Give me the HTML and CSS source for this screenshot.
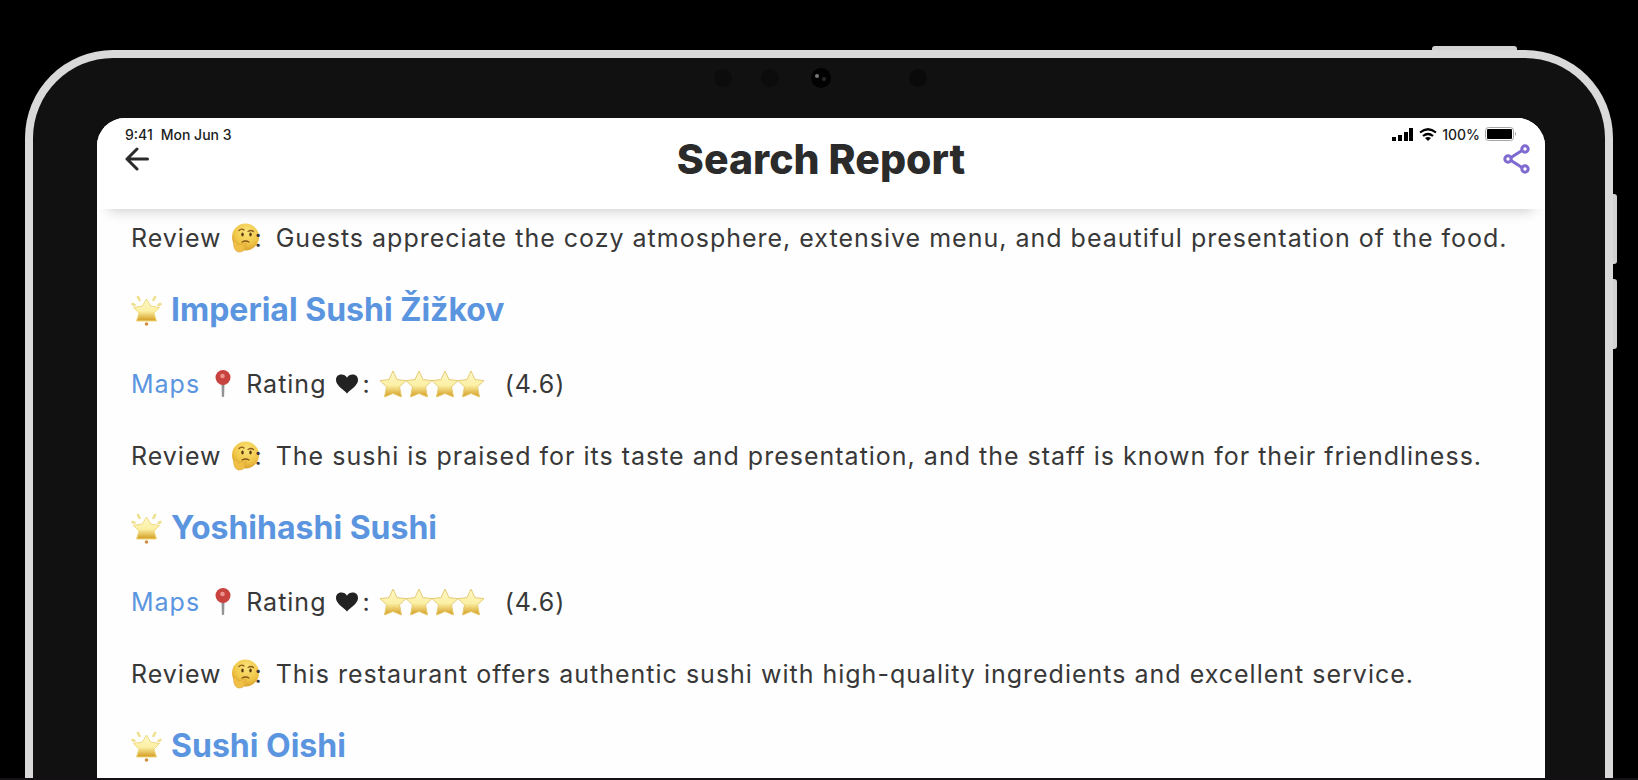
FILE: index.html
```html
<!DOCTYPE html>
<html lang="en">
<head>
    <meta charset="UTF-8">
    <meta name="viewport" content="width=device-width, initial-scale=1.0">
    <title>Search Report</title>
    <link rel="stylesheet" href="styles.css">
</head>
<body>
    <!-- shared icons -->
    <svg class="defs" width="0" height="0" aria-hidden="true">
        <defs>
            <linearGradient id="gold" x1="0" y1="0" x2="0" y2="1">
                <stop offset="0" stop-color="#fdf8cc"/>
                <stop offset="0.55" stop-color="#fbf0a4"/>
                <stop offset="1" stop-color="#d39a1c"/>
            </linearGradient>
            <radialGradient id="face" cx="0.55" cy="0.3" r="0.75">
                <stop offset="0" stop-color="#fbe37b"/>
                <stop offset="0.6" stop-color="#f0c848"/>
                <stop offset="1" stop-color="#d79a2b"/>
            </radialGradient>
            <symbol id="glow" viewBox="0 0 30 32">
                <path d="M15 5l4.200 7 8.800 1.500-5.500 5.500 2.500 8H5l2.500-8L2 13.500 10.800 12z" fill="url(#gold)" stroke="#f0da80" stroke-width="1" stroke-linejoin="round"/>
                <path d="M8 6l-1.500-3M22 6l1.500-3M3 11l-2-1M27 11l2-1" stroke="#efe08f" stroke-width="2.600" stroke-linecap="round"/>
                <circle cx="15" cy="30" r="1.800" fill="#d08f3e"/>
            </symbol>
            <symbol id="star" viewBox="0 0 28 28">
                <path d="M14 1l4 8.600 9 1-6.500 6.200L22.500 27 14 23.500 5.500 27l2-10.200L1 10.600l9-1z" fill="url(#gold)" stroke="#e6cb72" stroke-width="1" stroke-linejoin="round"/>
            </symbol>
            <symbol id="think" viewBox="0 0 28 30">
                <circle cx="14.500" cy="14" r="13.500" fill="url(#face)"/>
                <path d="M8 7.500q2.500-2.500 5-.5M17 8.500q3-2 5.500 0" fill="none" stroke="#8a5a1c" stroke-width="1.300" stroke-linecap="round"/>
                <ellipse cx="11.500" cy="11.500" rx="1.200" ry="2" fill="#54370f"/>
                <ellipse cx="19.500" cy="11.500" rx="1.200" ry="2" fill="#54370f"/>
                <path d="M11 19q3.500-2 7 0" fill="none" stroke="#85551a" stroke-width="1.300" stroke-linecap="round"/>
                <path d="M2.500 19q1.500-2 3 0l2 3 6-2q2.500-.3 2 1.500l-3 1.500q2.500 1 1 3.500-2 3-6 2.500Q2.500 28 2.500 19z" fill="#efc045" stroke="#dba236" stroke-width="0.600"/>
            </symbol>
            <symbol id="pin" viewBox="0 0 16 28">
                <path d="M7 13h2l-.4 13.500h-1.200z" fill="#8d8d90" stroke="#8d8d90"/>
                <circle cx="8" cy="7.500" r="7.500" fill="#c8423e"/>
                <circle cx="7.500" cy="6" r="2.300" fill="#ec938c"/>
            </symbol>
            <symbol id="heart" viewBox="0 0 24 22">
                <path d="M12 20.500C8 16 1 12.500 1 7c0-6.500 8.500-7 11-2.200C14.500 0 23 .5 23 7c0 5.500-7 9-11 13.500z" fill="#222"/>
            </symbol>
        </defs>
    </svg>

    <div class="tablet">
        <span class="key key-power"></span>
        <span class="key key-up"></span>
        <span class="key key-down"></span>
        <div class="sensors">
            <svg width="212" height="24" viewBox="0 0 212 24">
                <circle cx="8" cy="12" r="9" fill="#0c0c0c"/>
                <circle cx="55" cy="12" r="9" fill="#0c0c0c"/>
                <circle cx="106" cy="12" r="10" fill="#020202"/>
                <circle cx="102" cy="10" r="2" fill="#777"/>
                <circle cx="109" cy="13" r="2" fill="#292929"/>
                <circle cx="203" cy="12" r="9" fill="#0a0a0a"/>
            </svg>
        </div>

        <div class="screen">
            <header class="header">
                <div class="status">
                    <span class="time">9:41</span>
                    <span>Mon Jun 3</span>
                    <div class="status-right">
                        <svg width="22" height="13" viewBox="0 0 22 13">
                            <path d="M0 9h4v4H0zM6 7h4v6H6zM12 4h4v9h-4zM17 0h4v13h-4z"/>
                        </svg>
                        <svg width="18" height="13" viewBox="0 0 18 13">
                            <path d="M1 4.500q8-6.500 16 0M4 8q5-4 10 0" fill="none" stroke="#000" stroke-width="2.200"/>
                            <path d="M6 10q3-2.200 6 0l-3 3z"/>
                        </svg>
                        <span>100%</span>
                        <svg width="32" height="14" viewBox="0 0 32 14">
                            <rect x="0.500" y="0.500" width="28" height="13" rx="3" fill="#fff" stroke="#a5a5a5"/>
                            <rect x="2" y="2" width="25" height="10" rx="1"/>
                            <path d="M30 5q2 2 0 4z" fill="#a5a5a5"/>
                        </svg>
                    </div>
                </div>
                <div class="bar">
                    <button class="icon-btn" type="button" aria-label="Back">
                        <svg width="24" height="24" viewBox="0 0 24 24" fill="none" stroke="#2b2b2b" stroke-width="3" stroke-linecap="round" stroke-linejoin="round">
                            <path d="M22.500 12H2M12 2L2 12l10 10"/>
                        </svg>
                    </button>
                    <h1>Search Report</h1>
                    <button class="icon-btn" type="button" aria-label="Share">
                        <svg width="28" height="30" viewBox="0 0 28 30" fill="none" stroke="#7f6bd0" stroke-width="3">
                            <path d="M8 13.500l11-7M8 16.500l11 7"/>
                            <circle cx="5" cy="15" r="3.200"/>
                            <circle cx="22" cy="5" r="3.200"/>
                            <circle cx="22" cy="25" r="3.200"/>
                        </svg>
                    </button>
                </div>
            </header>

            <main class="report">
                <p class="review"><span>Review</span><svg class="think"><use href="#think"/></svg><span class="colon">:</span>Guests appreciate the cozy atmosphere, extensive menu, and beautiful presentation of the food.</p>

                <h2><svg class="glow"><use href="#glow"/></svg><a href="#">Imperial Sushi Žižkov</a></h2>
                <p class="rating">
                    <a href="#">Maps</a><svg class="pin"><use href="#pin"/></svg><span>Rating</span><svg class="heart"><use href="#heart"/></svg><span>:</span>
                    <span class="stars"><svg><use href="#star"/></svg><svg><use href="#star"/></svg><svg><use href="#star"/></svg><svg><use href="#star"/></svg></span>
                    <span>(4.6)</span>
                </p>
                <p class="review"><span>Review</span><svg class="think"><use href="#think"/></svg><span class="colon">:</span>The sushi is praised for its taste and presentation, and the staff is known for their friendliness.</p>

                <h2><svg class="glow"><use href="#glow"/></svg><a href="#">Yoshihashi Sushi</a></h2>
                <p class="rating">
                    <a href="#">Maps</a><svg class="pin"><use href="#pin"/></svg><span>Rating</span><svg class="heart"><use href="#heart"/></svg><span>:</span>
                    <span class="stars"><svg><use href="#star"/></svg><svg><use href="#star"/></svg><svg><use href="#star"/></svg><svg><use href="#star"/></svg></span>
                    <span>(4.6)</span>
                </p>
                <p class="review"><span>Review</span><svg class="think"><use href="#think"/></svg><span class="colon">:</span>This restaurant offers authentic sushi with high-quality ingredients and excellent service.</p>

                <h2><svg class="glow"><use href="#glow"/></svg><a href="#">Sushi Oishi</a></h2>
            </main>
        </div>
    </div>
</body>
</html>
```
FILE: styles.css
```css
* {
    box-sizing: border-box;
    margin: 0;
    padding: 0;
}

body {
    display: flex;
    flex-direction: column;
    height: 100vh;
    overflow: hidden;
    padding: 50px 25px 0;
    border-bottom: 2px solid #141114;
    background: #000;
    font-family: Inter, "Liberation Sans", sans-serif;
    color: #383838;
}

a {
    color: #5b95e0;
    text-decoration: none;
}

svg {
    display: block;
    flex-shrink: 0;
}

.defs {
    position: absolute;
}

.tablet {
    position: relative;
    display: flex;
    flex-direction: column;
    flex: 1;
    min-height: 0;
    padding: 0 60px 0 64px;
    border: 8px solid #dad9da;
    border-bottom: 0;
    border-radius: 88px 88px 0 0;
    background: #111;
}

/* hardware keys on the edge of the case */
.key {
    position: absolute;
    right: -12px;
    width: 4px;
    height: 70px;
    border-radius: 0 3px 3px 0;
    background: #d2d2d2;
}

.key-power {
    top: -12px;
    right: 88px;
    width: 85px;
    height: 4px;
    border-radius: 3px 3px 0 0;
}

.key-up {
    top: 136px;
}

.key-down {
    top: 221px;
}

.sensors {
    display: flex;
    justify-content: center;
    height: 60px;
    padding-top: 8px;
}

.screen {
    flex: 1;
    min-height: 0;
    overflow: hidden;
    border-radius: 28px 28px 0 0;
    background: #fefefe;
}

.header {
    height: 91px;
    padding: 6px 28px 0;
    background: #fff;
    box-shadow: 0 14px 12px -12px rgba(0, 0, 0, .2);
}

.status {
    display: flex;
    align-items: center;
    gap: 8px;
    height: 20px;
    font-size: 14px;
    font-weight: 500;
    color: #1c1c1c;
}

.status-right {
    display: flex;
    align-items: center;
    gap: 5px;
    margin-left: auto;
}

.bar {
    display: grid;
    grid-template-columns: 1fr auto 1fr;
    align-items: center;
    height: 24px;
    margin-right: -14px;
    margin-left: -14px;
}

.icon-btn {
    justify-self: start;
    padding-left: 14px;
    border: 0;
    background: none;
    cursor: pointer;
}

.icon-btn:last-child {
    justify-self: end;
    padding-left: 0;
}

h1 {
    font-size: 41px;
    font-weight: 800;
    line-height: 24px;
    color: #2b2b2b;
}

.report {
    display: flex;
    flex-direction: column;
    gap: 36px;
    padding: 11px 34px 0;
    font-size: 25px;
    line-height: 36px;
    white-space: nowrap;
}

h2 {
    display: flex;
    align-items: center;
    gap: 9px;
    font-size: 32px;
    font-weight: 700;
    line-height: 36px;
}

.review,
.rating {
    display: flex;
    align-items: center;
    letter-spacing: 1px;
}

.rating {
    margin-top: 2px;
}

.glow {
    width: 31px;
    height: 32px;
}

.think {
    width: 28px;
    height: 30px;
    margin-left: 9px;
}

.colon {
    margin: 0 13px 0 -4px;
}

.pin {
    width: 16px;
    height: 28px;
    margin: 0 15px;
}

.heart {
    width: 24px;
    height: 22px;
    margin: 0 3px 0 9px;
}

.stars {
    display: flex;
    margin: 0 22px 0 8px;
}

.stars svg {
    width: 28px;
    height: 28px;
    margin-right: -2px;
}
```
